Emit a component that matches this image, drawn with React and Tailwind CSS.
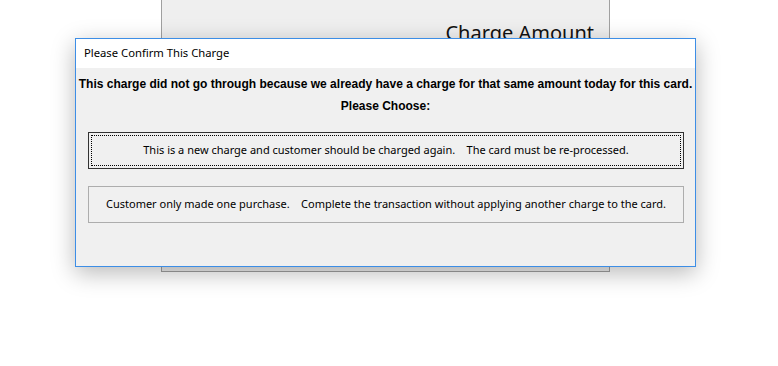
import React from 'react';

const uiFont = { fontFamily: '"Noto Sans", "Open Sans", sans-serif' };
const boldFont = { fontFamily: '"Liberation Sans", Arial, sans-serif' };

function ChoiceButton({ children, focused }) {
  return (
    <button
      className={
        focused
          ? 'relative w-[596px] h-[37px] ml-[12px] bg-[#f0f0f0] border border-[#333333] text-[11px] text-black'
          : 'relative w-[596px] h-[37px] ml-[12px] bg-[#f0f0f0] border border-[#adadad] text-[11px] text-black'
      }
      style={uiFont}
    >
      {focused && <span className="absolute inset-[2px] border border-dotted border-black" />}
      <span className="whitespace-pre">{children}</span>
    </button>
  );
}

export default function App() {
  return (
    <div className="relative w-[778px] h-[366px] bg-white overflow-hidden">
      {/* Window behind the dialog */}
      <div className="ml-[161px] w-[449px] h-[272px] bg-[#efefef] border-x border-b border-[#a0a0a0] flex justify-end">
        <div className="pt-[19px] pr-[15px] text-[20px] leading-[28px] text-[#111]" style={uiFont}>
          Charge Amount
        </div>
      </div>

      {/* Confirm dialog */}
      <div className="absolute left-[75px] top-[38px] w-[621px] h-[229px] border border-[#3d8ee6] bg-[#f0f0f0] shadow-[0_6px_22px_rgba(0,0,0,0.28)] flex flex-col">
        <div className="h-[29px] bg-white flex items-center pl-[8px] text-[11.25px] text-black" style={uiFont}>
          Please Confirm This Charge
        </div>
        <div className="pt-[6px] flex flex-col">
          <div className="text-center font-bold text-[12px] leading-[20px] text-black" style={boldFont}>
            This charge did not go through because we already have a charge for that same amount today for this card.
          </div>
          <div className="mt-[2px] text-center font-bold text-[12px] leading-[20px] text-black" style={boldFont}>
            Please Choose:
          </div>
          <div className="mt-[16px] flex flex-col gap-[17px]">
            <ChoiceButton focused>
              {'This is a new charge and customer should be charged again.    The card must be re-processed.'}
            </ChoiceButton>
            <ChoiceButton>
              {'Customer only made one purchase.    Complete the transaction without applying another charge to the card.'}
            </ChoiceButton>
          </div>
        </div>
      </div>
    </div>
  );
}
